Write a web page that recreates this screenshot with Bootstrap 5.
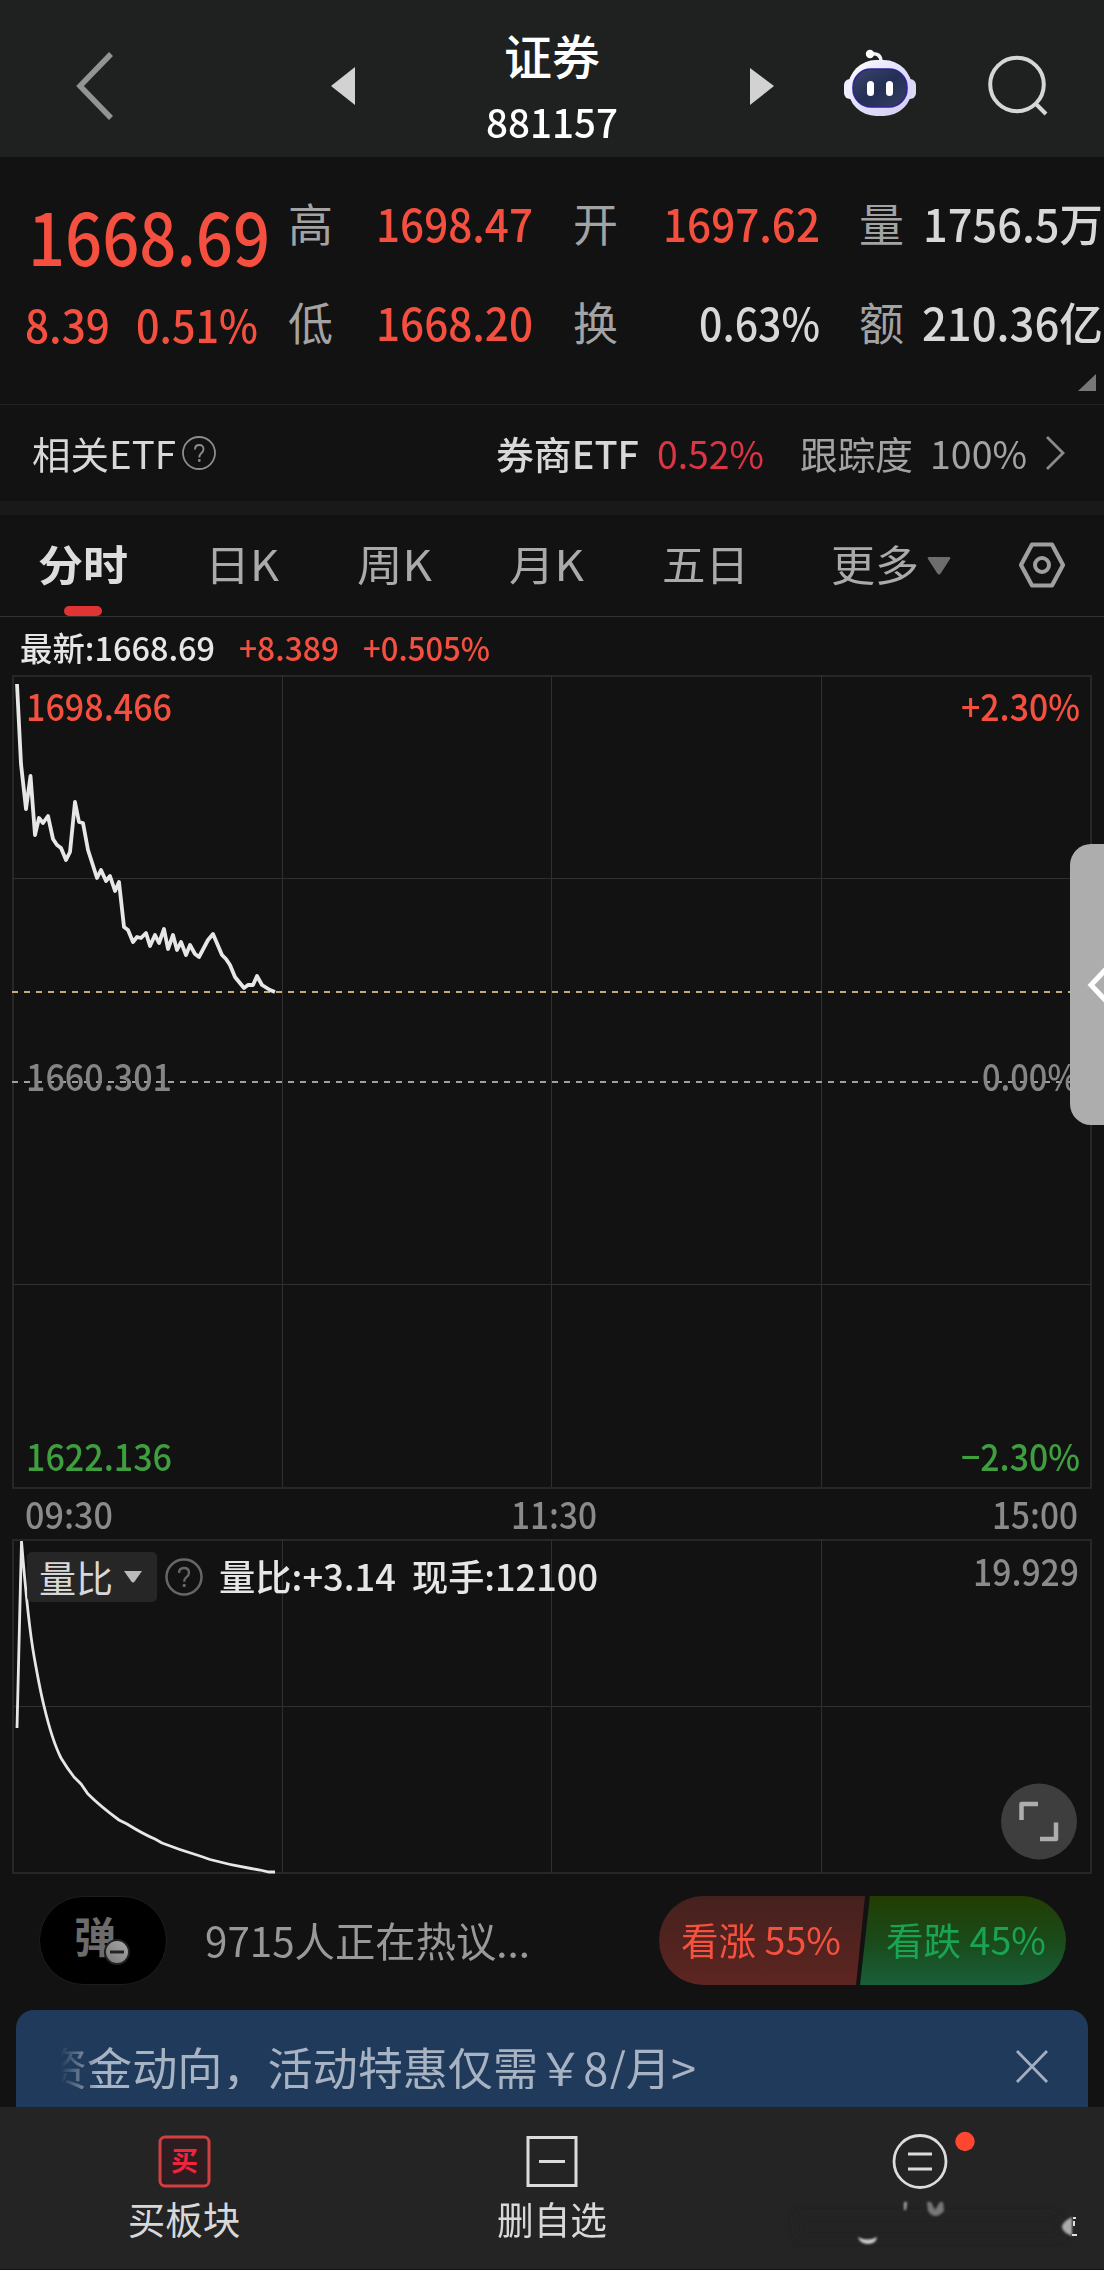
<!DOCTYPE html>
<html lang="zh-CN">
<head>
<meta charset="utf-8">
<meta name="viewport" content="width=device-width, initial-scale=1">
<title>证券 881157</title>
<link rel="stylesheet" href="https://cdn.jsdelivr.net/npm/bootstrap@5.3.0/dist/css/bootstrap.min.css">
<style>
:root{--up:#f5503f;--line:#262626}
html,body{margin:0;background:#121212}
body{width:1104px;height:2270px;overflow:hidden;font-family:"Noto Sans CJK SC",sans-serif;color:#d8d8d8;line-height:1}
svg{display:block}
.fit{display:inline-block;white-space:nowrap;transform-origin:0 50%}
.up{color:var(--up)} .dn{color:#3f9f3f} .dim{color:#a3a3a3} .fade-t{color:#8a8a8a}
.top{height:157px;background:#1f2120;display:grid;grid-template-columns:320px 150px 164px 196px 116px 1fr;align-items:center;padding-top:14px}
.top-title{font-size:48px;font-weight:500;color:#fff;margin-bottom:24px}
.top-code{font-size:39px;font-weight:500;color:#fff}
.quote{height:248px;border-bottom:1px solid #222;padding-top:16px;position:relative}
.quote-grid{display:grid;grid-template-columns:288px 88px 195px 104px 182px 69px 1fr;font-size:45px}
.q-row{height:99px;display:flex;align-items:center;font-weight:500}
.q-lab{font-weight:400;color:#a3a3a3}
.price{font-size:72px;padding:24px 0 0 28px}
.corner{position:absolute;right:8px;top:217px}
.etf{height:96px;font-size:38px}
.band{height:14px;background:#191919}
.tabs-bar{height:102px;border-bottom:1px solid #333;font-size:42px;color:#aaa;position:relative}
.tabs-bar .fit{margin-top:-5px}
.tabs-bar .on{font-weight:700;color:#ddd}
.tabs-bar .bar-on{position:absolute;left:64px;bottom:0;width:38px;height:10px;border-radius:5px;background:#e03434}
.latest{height:57px;font-size:33px;font-weight:500;padding-top:3px}
.chart-a{height:815px;position:relative}
.times{height:50px;font-size:36px;padding:0 26px 3px 25px;font-weight:500}
.chart-b{height:335px;position:relative}
.tag{position:absolute;font-size:36.5px;font-weight:500}
.sel{position:absolute;left:27px;top:13px;width:130px;height:50px;border-radius:5px;background:rgba(42,42,42,.85);font-size:37px;padding-left:12px}
.zoomer{position:absolute;left:1001px;top:244px}
.handle{position:absolute;left:1070px;top:844px;width:34px;height:281px;border-radius:21px 0 0 21px;background:#adadad;overflow:hidden}
.talk{height:136px;padding-top:22px}
.danmu{width:128px;height:89px;border-radius:45px;background:#000;border:1px solid #1d1d1d;margin-left:39px;position:relative}
.danmu-t{font-size:42px;font-weight:700;color:#6c6c6c;position:absolute;left:34px;top:17px}
.danmu svg{position:absolute;left:63px;top:41px}
.vote{width:407px;height:89px;border-radius:45px;overflow:hidden;position:relative;font-size:38px;margin-left:auto;margin-right:38px}
.v-up,.v-dn{height:89px;display:flex;align-items:center;padding-bottom:3px}
.v-up{width:206px;padding-left:22px;color:#f4513f;background:linear-gradient(#45211e,#5d2520);clip-path:polygon(0 0,100% 0,197px 100%,0 100%)}
.v-dn{width:206px;margin-left:-5px;padding-left:26px;color:#1aa352;background:linear-gradient(#223d02,#1a4a1a 50%,#195f38);clip-path:polygon(10px 0,100% 0,100% 100%,0 100%)}
.promo{height:97px;margin:0 16px;padding-top:15px;background:#1f3a5a;border-radius:18px 18px 0 0;color:#a7b2c2;font-size:45px}
.promo-t{margin-left:44px;width:700px;overflow:hidden;-webkit-mask-image:linear-gradient(90deg,transparent,#000 38px)}
.promo-t .fit{margin-left:-18px}
.dock{height:162px;background:#242424;font-size:37.5px;color:#d8d8d8;position:relative}
.dock-i{width:368px;padding-top:26px}
.smear{position:absolute;left:780px;top:85px}
</style>
</head>
<body>
<header class="top">
  <svg width="320" height="80"><path d="M111 8 80 40l31 32" fill="none" stroke="#939393" stroke-width="5.500"/></svg>
  <svg width="60" height="80"><path d="M11 40 35 21v38z" fill="#d2d2d2"/></svg>
  <div class="d-flex flex-column align-items-center">
    <div class="top-title">证券</div><div class="top-code"><span class="fit" data-w="132">881157</span></div>
  </div>
  <svg width="160" height="80" style="margin-left:104px"><path d="M12 22v37l24-19z" fill="#d2d2d2"/></svg>
  <svg width="92" height="80" viewBox="830 46 92 80">
    <defs>
      <linearGradient id="hd" x1="0" x2="1" y2="1"><stop offset="0" stop-color="#fff"/><stop offset=".5" stop-color="#dfe0fa"/><stop offset="1" stop-color="#d4ccf2"/></linearGradient>
      <linearGradient id="fc" y1="0" y2="1"><stop offset="0" stop-color="#39456b"/><stop offset=".5" stop-color="#232f55"/><stop offset="1" stop-color="#36405f"/></linearGradient>
    </defs>
    <path d="M870 54q11-2 11 8" fill="none" stroke="#f1f1f8" stroke-width="3.500"/><circle cx="870" cy="54" r="4.200" fill="#fff"/>
    <rect x="844" y="79" width="12" height="20" rx="6" fill="#eef"/><rect x="904" y="79" width="12" height="20" rx="6" fill="#dcd8f6"/>
    <rect x="848" y="60" width="64" height="56" rx="28" fill="url(#hd)"/>
    <rect x="853" y="69" width="54" height="38" rx="18" fill="url(#fc)" stroke="#31209a" stroke-width="1.500"/>
    <rect x="867" y="81" width="7" height="15" rx="3.500" fill="#fff"/><rect x="886" y="81" width="7" height="15" rx="3.500" fill="#fff"/>
  </svg>
  <svg width="150" height="80" viewBox="946 46 150 80"><g fill="none" stroke="#d6d6d6" stroke-width="4"><circle cx="1017" cy="84.500" r="26.800"/><path d="M1035 103l11 11"/></g></svg>
</header>

<section class="quote">
  <div class="quote-grid">
    <div class="up"><div class="q-row price"><span class="fit" data-w="242">1668.69</span></div>
      <div class="q-row" style="padding:4px 0 0 25px"><span class="fit" data-w="85">8.39</span><span class="fit" data-w="122" style="position:relative;left:26px">0.51%</span></div></div>
    <div class="q-lab"><div class="q-row q-lab">高</div><div class="q-row q-lab">低</div></div>
    <div class="up"><div class="q-row"><span class="fit" data-w="157">1698.47</span></div><div class="q-row"><span class="fit" data-w="157">1668.20</span></div></div>
    <div><div class="q-row q-lab" style="padding-left:2px">开</div><div class="q-row q-lab" style="padding-left:2px">换</div></div>
    <div class="d-flex flex-column align-items-end" style="width:145px"><div class="q-row up"><span class="fit" data-w="157">1697.62</span></div><div class="q-row"><span class="fit" data-w="121">0.63%</span></div></div>
    <div><div class="q-row q-lab" style="padding-left:2px">量</div><div class="q-row q-lab" style="padding-left:2px">额</div></div>
    <div class="d-flex flex-column align-items-end" style="width:177px"><div class="q-row"><span class="fit" data-w="180">1756.5万</span></div><div class="q-row"><span class="fit" data-w="181">210.36亿</span></div></div>
  </div>
  <svg class="corner" width="18" height="17"><path d="M18 0v17H0z" fill="#777"/></svg>
</section>

<section class="etf d-flex align-items-center">
  <span class="fit" data-w="144" style="margin-left:32px">相关ETF</span>
  <svg width="36" height="36" style="margin-left:5px"><circle cx="18" cy="18" r="16" fill="none" stroke="#8c8c8c" stroke-width="1.800"/><path d="M14 14.500q0-4.500 4.300-4.500t4.200 4.200q0 2.300-2.500 4.300-1.700 1.500-1.700 4" fill="none" stroke="#8c8c8c" stroke-width="1.900"/><circle cx="18.300" cy="25.500" r="1.400" fill="#8c8c8c"/></svg>
  <span class="d-flex align-items-center" style="margin-left:279px"><span class="fit fw-medium" style="font-weight:500" data-w="143">券商ETF</span></span>
  <span class="fit" data-w="107" style="color:#dc3545;position:relative;left:18px">0.52%</span>
  <span class="fit dim" data-w="113" style="position:relative;left:54px">跟踪度</span>
  <span class="fit dim" data-w="97" style="position:relative;left:71px">100%</span>
  <svg width="24" height="40" style="position:relative;left:88px"><path d="M3 4l16 16L3 36" fill="none" stroke="#8a8a8a" stroke-width="2.800"/></svg>
</section>
<div class="band"></div>

<nav class="tabs-bar d-flex align-items-center">
  <span class="on fit" data-w="90" style="margin-left:38px">分时</span>
  <span class="fit" data-w="74" style="position:relative;left:77px">日K</span>
  <span class="fit" data-w="75" style="position:relative;left:155px">周K</span>
  <span class="fit" data-w="75" style="position:relative;left:232px">月K</span>
  <span class="fit" data-w="87" style="position:relative;left:310px">五日</span>
  <span class="fit" data-w="88" style="position:relative;left:392px">更多</span>
  <svg width="24" height="20" style="position:relative;left:400px"><path d="M2 1h20q2 0 1 2l-9 14q-2 3-4 0L1 3q-1-2 1-2z" fill="#6d6d6d"/></svg>
  <svg width="52" height="52" style="position:relative;left:465px;top:-1px"><path d="M16 5.500h20l11 20.500-11 20.500H16L5 26z" fill="none" stroke="#a0a0a0" stroke-width="4.200" stroke-linejoin="round"/><circle cx="26" cy="26" r="7" fill="none" stroke="#a0a0a0" stroke-width="4"/></svg>
  <span class="bar-on"></span>
</nav>

<div class="latest d-flex align-items-center">
  <span class="fit" data-w="195" style="margin-left:20px;color:#e6e6e6">最新:1668.69</span>
  <span class="fit up" data-w="100" style="position:relative;left:24px">+8.389</span>
  <span class="fit up" data-w="127" style="position:relative;left:48px">+0.505%</span>
</div>

<section class="chart-a">
  <svg width="1104" height="815" viewBox="0 674 1104 815">
    <g fill="none" stroke="#272727" stroke-width="2"><path d="M13 676h1078v812H13z"/></g>
    <g stroke="#303030" stroke-width="1"><path d="M282.500 676v811M551.500 676v811M821.500 676v811M13 878.500h1078M13 1284.500h1078"/></g>
    <path d="M12 992h1079" stroke="#c7ab80" stroke-width="2" stroke-dasharray="6 6"/>
    <path d="M12 1082h1079" stroke="#a0a0a0" stroke-width="2" stroke-dasharray="6 6"/>
    <path d="M17 684 21 764 26 809 30.500 776 35 835 39 818 43 823 48 816 53 839 57 845 61 848 66 860 70 852 75 802 79 822 83 823 88 850 97 878 101 870 106 881 110 876 115 891 119 882 124 927 128 930 133 942 137 937 141 938 146 933 150 946 155 935 159 943 164 929 168 949 173 935 177 950 181 942 186 955 190 945 195 954 199 957 208 940 213 934 222 955 226 959 230 965 235 977 244 988 248 985 253 985 257 976 262 985 270 990 275 992" fill="none" stroke="#e7e7e7" stroke-width="3.800" stroke-linejoin="round"/>
  </svg>
  <span class="tag up" style="left:26px;top:14px"><span class="fit" data-w="146">1698.466</span></span>
  <span class="tag up" style="left:961px;top:14px"><span class="fit" data-w="119">+2.30%</span></span>
  <span class="tag" style="left:26px;top:384px;color:#858585"><span class="fit" data-w="146">1660.301</span></span>
  <span class="tag" style="left:982px;top:384px;color:#858585"><span class="fit" data-w="96">0.00%</span></span>
  <span class="tag dn" style="left:26px;top:764px"><span class="fit" data-w="146">1622.136</span></span>
  <span class="tag dn" style="left:961px;top:764px"><span class="fit" data-w="119">−2.30%</span></span>
</section>
<div class="times d-flex align-items-center justify-content-between fade-t">
  <span class="fit" data-w="88">09:30</span><span class="fit" data-w="86" style="position:relative;left:1px">11:30</span><span class="fit" data-w="86">15:00</span>
</div>
<section class="chart-b">
  <svg width="1104" height="336" viewBox="0 1539 1104 336">
    <path d="M13 1540h1078v333H13z" fill="none" stroke="#272727" stroke-width="2"/>
    <path d="M282.500 1540v333M551.500 1540v333M821.500 1540v333M13 1706.500h1078" stroke="#303030"/>
    <path d="M17 1728 21.500 1541Q28 1622 34 1656T44 1706Q52 1740 61 1758 67 1768 74 1777 78 1781 81 1784L88 1794Q100 1806 119 1820L127 1824Q143 1834 155 1839L162 1843Q180 1850 200 1856L210 1859.500Q230 1865 251 1868.500L260 1870 269 1872 275 1872" fill="none" stroke="#e7e7e7" stroke-width="2.800"/>
  </svg>
  <div class="sel d-flex align-items-center"><span class="fit" data-w="74">量比</span><svg width="20" height="14" style="margin-left:10px"><path d="M1 1h18l-7 10q-2 3-4 0z" fill="#bbb"/></svg></div>
  <svg width="40" height="40" style="position:absolute;left:164px;top:18px"><circle cx="20" cy="20" r="17.500" fill="none" stroke="#666" stroke-width="2.500"/><path d="M15 16q0-5 5-5t5 4.700q0 2.500-2.800 4.600-2 1.700-2 4.500" fill="none" stroke="#666" stroke-width="2.300"/><circle cx="20.200" cy="28.500" r="1.700" fill="#666"/></svg>
  <span class="tag" style="left:219px;top:19px;color:#e6e6e6"><span class="fit" data-w="177">量比:+3.14</span><span class="fit" data-w="186" style="position:relative;left:16px">现手:12100</span></span>
  <span class="tag fade-t" style="left:973px;top:14px"><span class="fit" data-w="106">19.929</span></span>
  <svg class="zoomer" width="76" height="77" viewBox="1001 1784 76 76"><circle cx="1039" cy="1822" r="38" fill="#3e3e3e"/><path d="M1021.500 1820.500v-16h16.500M1040 1839.500h16v-16.500" fill="none" stroke="#adadad" stroke-width="4.500" stroke-linejoin="round"/></svg>
</section>
<div class="handle"><svg width="34" height="281"><path d="M38 123 21 141l17 18" fill="none" stroke="#fff" stroke-width="5"/></svg></div>

<section class="talk d-flex align-items-start">
  <div class="danmu"><span class="danmu-t">弹</span><svg width="28" height="28"><defs><linearGradient id="mg" x1="0" x2="1" y1="1" y2="0"><stop offset="0" stop-color="#777"/><stop offset="1" stop-color="#aaa"/></linearGradient></defs><circle cx="14" cy="14" r="12" fill="url(#mg)" stroke="#222" stroke-width="2"/><path d="M7 14h14" stroke="#222" stroke-width="3"/></svg></div>
  <div class="d-flex align-items-center" style="height:89px;margin-left:38px;font-size:40.500px;color:#999"><span class="fit" data-w="325">9715人正在热议...</span></div>
  <div class="vote d-flex"><div class="v-up"><span class="fit" data-w="160">看涨 55%</span></div><div class="v-dn"><span class="fit" data-w="160">看跌 45%</span></div></div>
</section>

<section class="promo d-flex align-items-center">
  <div class="promo-t"><span class="fit" data-w="654">资金动向，活动特惠仅需￥8/月&gt;</span></div>
  <svg width="36" height="36" style="margin-left:254px"><path d="M3 3l30 31M33 3 3 34" stroke="#a3aebf" stroke-width="2.800"/></svg>
</section>

<nav class="dock d-flex text-center">
  <div class="dock-i"><svg class="mx-auto" width="56" height="56"><rect x="4" y="4" width="49" height="49" rx="5" fill="#2d1d20" stroke="#cf4141" stroke-width="3"/><text x="28.500" y="38" text-anchor="middle" font-size="27" font-weight="700" fill="#f0243c">买</text></svg><div style="margin-top:10px">买板块</div></div>
  <div class="dock-i"><svg class="mx-auto" width="56" height="56"><path d="M4 4.500h48v48H4zM15 28.500h26" fill="none" stroke="#dcdcdc" stroke-width="3"/></svg><div style="margin-top:10px"><span class="fit" data-w="110">删自选</span></div></div>
  <div class="dock-i"><svg class="mx-auto overflow-visible" width="56" height="56"><circle cx="28" cy="28.500" r="26" fill="none" stroke="#dcdcdc" stroke-width="2.800"/><path d="M16 21h24M16 36h24" stroke="#dcdcdc" stroke-width="2.800"/><circle cx="73" cy="8.500" r="9.700" fill="#ff4631"/></svg></div>
  <svg class="smear" width="310" height="76" viewBox="780 2194 310 76">
    <defs><filter id="soft" x="-50%" y="-50%" width="200%" height="200%"><feGaussianBlur stdDeviation="1"/></filter><filter id="wide" x="-20%" y="-50%" width="140%" height="200%"><feGaussianBlur stdDeviation="6"/></filter></defs>
    <path d="M795 2218h260l10 22H800z" fill="#202020" opacity=".6" filter="url(#wide)"/>
    <g filter="url(#soft)"><path d="M904 2204h3l-1 8h-2z" fill="#aaa"/><path d="M927 2204h4l4 8 5-8h3l1 9q-9 10-16 0z" fill="#777"/><path d="M858 2239q9 5 19 0-1 7-9 7t-10-7z" fill="#ccc"/><path d="M1072 2219v19q-10-4-10-9t10-10z" fill="#aaa"/></g>
    <path d="M1073 2219h3v2h-3zM1073 2223h2v5h-2zM1072 2236h5v2h-5z" fill="#ddd"/>
  </svg>
</nav>
<script src="https://cdn.jsdelivr.net/npm/bootstrap@5.3.0/dist/js/bootstrap.bundle.min.js"></script>
<script>
// Condense each label horizontally to the width given in data-w.
document.querySelectorAll('.fit').forEach(function (el) {
  var natural = el.getBoundingClientRect().width, w = +el.dataset.w;
  el.style.transform = 'scaleX(' + w / natural + ')';
  el.style.marginRight = (w - natural) + 'px';
  el.style.flexShrink = 0;
});
</script>
</body>
</html>
